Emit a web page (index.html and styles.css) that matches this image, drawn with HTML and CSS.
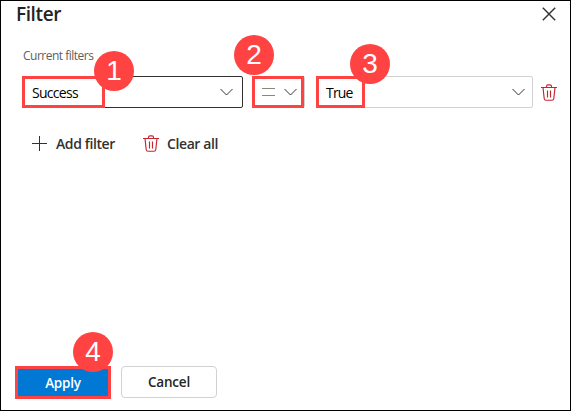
FILE: index.html
```
<!DOCTYPE html>
<html lang="en">
<head>
<meta charset="utf-8">
<title>Filter</title>
<link rel="stylesheet" href="styles.css">
</head>
<body>
<svg class="defs" aria-hidden="true">
  <symbol id="chevron" viewBox="0 0 13 8"><path d="M.5 1l6 6 6-6" fill="none" stroke="currentColor" stroke-width="1"/></symbol>
  <symbol id="trash" viewBox="0 0 16 17"><path d="M0 3.500h16M5.500 3.500V2.200Q5.500.8 7 .8h2q1.500 0 1.500 1.400v1.300M2 3.500l1.200 11q.2 1.700 1.800 1.700h6q1.600 0 1.800-1.700L14 3.500M6.500 6.500v7M9.500 6.500v7" fill="none" stroke="currentColor" stroke-width="1.150"/></symbol>
</svg>
<main class="panel">
  <header class="header">
    <h1 class="title">Filter</h1>
    <svg class="close" viewBox="0 0 14 14"><path d="M.8.8l12.400 12.400M13.200.8L.8 13.200" fill="none" stroke="currentColor" stroke-width="1.400"/></svg>
  </header>
  <div class="label"><span>Current filters</span></div>
  <div class="filters">
    <div class="select field">
      <span class="success">Success</span>
      <svg class="chevron"><use href="#chevron"/></svg>
      <i class="mark mark-field"></i><b class="badge badge-1">1</b>
    </div>
    <div class="select operator">
      <svg class="equals" viewBox="0 0 13 8"><path d="M0 .5h13M0 7.500h13" stroke="currentColor"/></svg>
      <svg class="chevron"><use href="#chevron"/></svg>
      <i class="mark mark-operator"></i><b class="badge badge-2">2</b>
    </div>
    <div class="select value">
      <span class="true">True</span>
      <svg class="chevron"><use href="#chevron"/></svg>
      <i class="mark mark-value"></i><b class="badge badge-3">3</b>
    </div>
    <svg class="trash"><use href="#trash"/></svg>
  </div>
  <div class="commands">
    <svg class="plus" viewBox="0 0 15 15"><path d="M7.500 0v15M0 7.500h15" stroke="currentColor"/></svg>
    <span class="add">Add filter</span>
    <svg class="trash"><use href="#trash"/></svg>
    <span class="clear">Clear all</span>
  </div>
  <footer class="footer">
    <div class="button apply"><span>Apply</span><b class="badge badge-4">4</b></div>
    <div class="button cancel"><span>Cancel</span></div>
  </footer>
</main>
</body>
</html>
```
FILE: styles.css
```
* { box-sizing: border-box; }
body { margin: 0; background: #fff; font-family: "Open Sans", "Noto Sans", sans-serif; font-size: 14px; color: #000; }
.defs { position: absolute; width: 0; height: 0; }
svg { display: block; flex: none; }
span { white-space: nowrap; }
.panel { width: 571px; height: 411px; border: 1px solid #000; display: flex; flex-direction: column; }
.header { height: 40px; display: flex; justify-content: space-between; align-items: flex-start; padding: 0 14px 0 15px; }
.title { margin: 0; font-size: 19px; line-height: 27px; font-weight: 600; letter-spacing: -.4px; color: #242424; }
.close { width: 14px; height: 14px; margin-top: 6px; color: #323130; }
.label { height: 35px; padding: 6px 0 0 22px; font-size: 12px; line-height: 17px; letter-spacing: -.5px; color: #605e5c; }
.filters { display: flex; align-items: center; height: 32px; padding-left: 21px; }
.select { position: relative; display: flex; align-items: center; justify-content: space-between; height: 32px; border: 1px solid #d2d2d2; border-radius: 2px; padding: 0 7px 0 9px; }
.field { width: 221px; border-color: #323130; padding-right: 9px; }
.operator { width: 53px; margin-left: 9px; }
.value { width: 217px; margin-left: 11px; }
.chevron { width: 13px; height: 8px; color: #323130; }
.equals { width: 13px; height: 8px; color: #8a8778; }
.success { letter-spacing: -.7px; }
.true { letter-spacing: -.8px; }
.trash { width: 16px; height: 17px; color: #c4262e; }
.filters > .trash { margin-left: 8px; }
.mark { position: absolute; left: -1px; top: -1px; height: 32px; border: 3px solid #ff4343; }
.mark-field { width: 83px; }
.mark-operator { width: 52px; }
.mark-value { width: 49px; }
.badge { position: absolute; width: 40px; height: 40px; border-radius: 50%; background: #ff4343; color: #fff; font: 400 28px/40px "Liberation Sans", sans-serif; letter-spacing: 0; text-align: center; }
.badge-1 { left: 71px; top: -26px; }
.badge-2 { left: -19px; top: -42px; }
.badge-3 { left: 33px; top: -33px; }
.badge-4 { left: 55px; top: -37px; }
.commands { display: flex; align-items: center; margin-top: 20px; height: 30px; padding-left: 31px; font-weight: 600; color: #323130; }
.plus { width: 15px; height: 15px; }
.add { margin-left: 9px; width: 60px; letter-spacing: -.4px; }
.commands .trash { margin-left: 27px; }
.clear { margin-left: 8px; letter-spacing: -.4px; }
.footer { display: flex; gap: 10px; margin-top: auto; padding: 0 0 11px 14px; }
.button { display: flex; align-items: center; justify-content: center; width: 96px; height: 33px; font-size: 13.5px; font-weight: 600; letter-spacing: -.2px; }
.apply { position: relative; background: #0078d4; border: 3px solid #ff4343; color: #fff; }
.cancel { height: 32px; border: 1px solid #d2d2d2; border-radius: 4px; color: #242424; }
```
